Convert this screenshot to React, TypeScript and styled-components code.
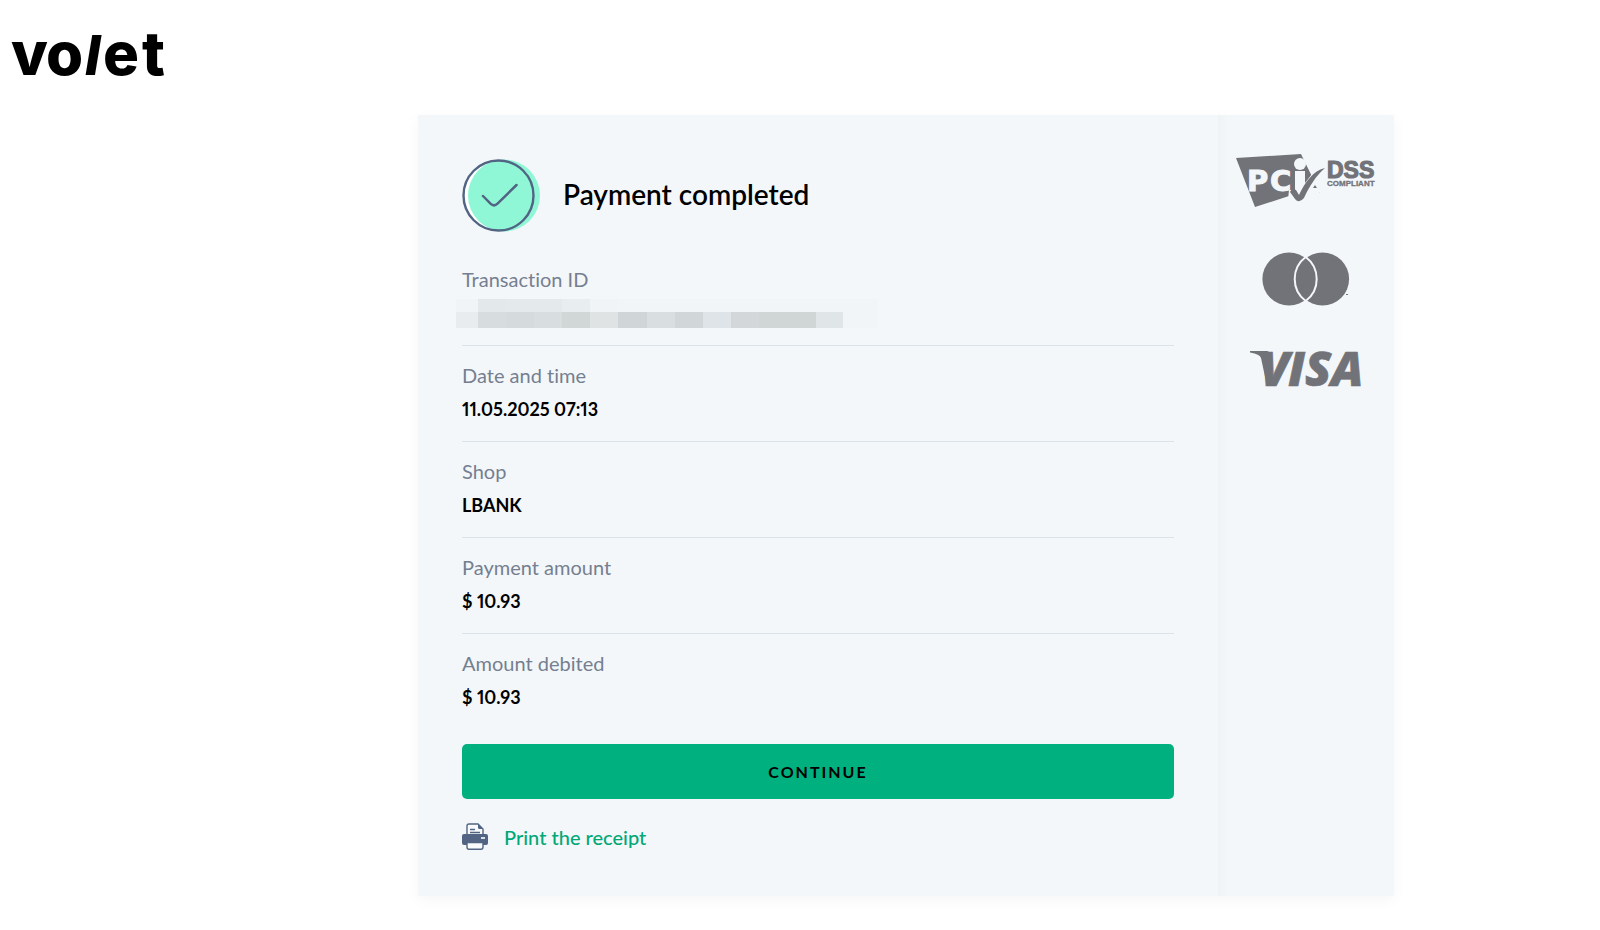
import React from "react";
import styled, { createGlobalStyle } from "styled-components";

const GlobalStyle = createGlobalStyle`
  *, *::before, *::after { box-sizing: border-box; }
  body {
    margin: 0;
    background: #fff;
    color: #000;
    font-family: Lato, "Open Sans", sans-serif;
    font-size: 20px;
    line-height: 24px;
    font-variant-ligatures: none;
  }
`;

const Header = styled.header`
  padding: 12px 12px 0;
  height: 115px;
`;

const HomeLink = styled.a`
  display: inline-block;
  color: #000;
  svg { display: block; overflow: visible; }
`;

const Page = styled.div`
  display: grid;
  grid-template-columns: 418fr 976fr 206fr;
  padding-bottom: 32px;
`;

const Card = styled.main`
  grid-column: 2;
  display: flex;
  background: #f3f7fa;
  box-shadow: 0 4px 14px rgba(0, 0, 0, 0.04);
`;

const Details = styled.section`
  flex: 1;
  min-width: 0;
  padding: 44px 44px 42px;
`;

const Partners = styled.aside`
  flex: 0 0 176px;
  display: flex;
  flex-direction: column;
  align-items: center;
  padding-top: 38px;
  background: linear-gradient(to right, #eef3f4, #f3f7fa 10px);
  svg { display: block; overflow: visible; }
`;

const PartnerList = styled.ul`
  display: flex;
  flex-direction: column;
  align-items: center;
  gap: 44px;
  margin: 0;
  padding: 0;
  list-style: none;
`;

const Status = styled.div`
  display: flex;
  align-items: center;
  gap: 23px;
  margin-bottom: 18px;
`;

const Title = styled.h1`
  margin: 0;
  padding-bottom: 4px;
  font-size: 28px;
  line-height: 36px;
  font-weight: 600;
`;

const Rows = styled.dl`
  margin: 0 0 35px;
`;

const Row = styled.div<{ $last?: boolean }>`
  padding: 17px 0 ${(p) => (p.$last ? 0 : 20)}px;
  border-bottom: ${(p) => (p.$last ? "none" : "1px solid #dbe2e9")};
`;

const Label = styled.dt`
  margin-bottom: 10px;
  color: #757f90;
`;

const Value = styled.dd`
  display: flow-root;
  margin: 0;
  height: 24px;
  font-size: 18px;
  font-weight: 700;
  font-variant-numeric: proportional-nums;
`;

const Mosaic = styled.svg`
  display: block;
  margin: -2px 0 -3px -6px;
`;

const ContinueButton = styled.button`
  display: block;
  width: 100%;
  height: 55px;
  border: 0;
  border-radius: 5px;
  background: #00b07f;
  color: #000;
  font: 700 16px/24px Lato, sans-serif;
  letter-spacing: 2px;
  cursor: pointer;
`;

const PrintLink = styled.a`
  display: inline-flex;
  align-items: center;
  gap: 16px;
  margin-top: 24px;
  color: #00a876;
  font-weight: 500;
  text-decoration: none;
`;

const LOWER = [
  [0, 22, "#e8ecee"], [22, 28, "#d7dcde"], [50, 28, "#d5dadc"], [78, 28, "#d8dde0"],
  [106, 28, "#d1d6d6"], [134, 28, "#dfe3e4"], [162, 29, "#d0d5d8"], [191, 28, "#d9dee1"],
  [219, 28, "#d1d6d9"], [247, 28, "#dfe4e8"], [275, 28, "#d3d7d9"], [303, 57, "#d0d5d5"],
  [360, 27, "#e0e5e8"], [387, 35, "#f1f5f8"],
] as const;

const UPPER = [
  [0, 22, "#f0f4f7"], [22, 28, "#e3e8ea"], [50, 56, "#e4e9eb"], [106, 28, "#e8edef"],
  [134, 28, "#f0f4f7"], [162, 260, "#f1f5f8"],
] as const;

const HiddenId = () => (
  <Mosaic width="422" height="29" role="img" aria-label="Hidden" shapeRendering="crispEdges">
    {UPPER.map(([x, w, c]) => <rect key={x} x={x} y="0" width={w} height="13" fill={c} />)}
    {LOWER.map(([x, w, c]) => <rect key={x} x={x} y="13" width={w} height="16" fill={c} />)}
  </Mosaic>
);

const Logo = () => (
  <svg width="170" height="84" role="img" aria-label="volet" fontFamily="Inter" fontWeight="800" fontSize="60">
    <text y="63" x="-1">v</text>
    <text y="63" x="34">o</text>
    <text y="63" x="73" fontStyle="italic" fontSize="55">l</text>
    <text y="63" x="91">e</text>
    <text y="63" x="130">t</text>
  </svg>
);

const Success = () => (
  <svg width="78" height="73" fill="none" aria-hidden="true">
    <circle cx="36.500" cy="36.500" r="35" fill="#fff" />
    <circle cx="42" cy="36.500" r="36" fill="#90f7d6" />
    <circle cx="36.500" cy="36.500" r="35" stroke="#526483" strokeWidth="2.400" />
    <path d="M21 37 L28.500 44.700 Q32 48 35.500 44.700 L54.500 26" stroke="#526483" strokeWidth="2.500" strokeLinecap="round" />
  </svg>
);

const Printer = () => (
  <svg width="26" height="27" fill="none" aria-hidden="true">
    <path d="M5 13 V3 Q5 1 7 1 H16 L21 6 V13" fill="#f8fafc" stroke="#526483" strokeWidth="1.4" />
    <path d="M16 1 V4.500 Q16 6 17.500 6 H21 Z" fill="#526483" />
    <path d="M8 6.500 H13 M8 9.500 H18" stroke="#526483" strokeWidth="1.3" />
    <rect x="0" y="11" width="26" height="11" rx="2" fill="#526483" />
    <path d="M19 15 H23" stroke="#fff" strokeWidth="1.6" />
    <path d="M5 19.500 H21 V24 Q21 26.200 19 26.200 H7 Q5 26.200 5 24 Z" fill="#f8fafc" stroke="#526483" strokeWidth="1.4" />
  </svg>
);

const Pci = () => (
  <svg width="140" height="55" role="img" aria-label="PCI DSS compliant">
    <path d="M0 5 L65 1 L84 40 L53 43 L19 54 Z" fill="#727378" />
    <text x="11 34" y="38" fill="#f3f7fa" stroke="#f3f7fa" fontFamily="DejaVu Sans" fontWeight="700" fontSize="29">PC</text>
    <path d="M59 18 H69 V30 L79 17 L90 14 L83 43 L70 50 L52 47 L53 37 H59 Z" fill="#f3f7fa" />
    <circle cx="64" cy="11" r="6" fill="#f3f7fa" />
    <path d="M54 39 Q56 34 60 37 L63 42 C69 29 78 17 89 15 C80 23 74 32 68 45 Q63 51 59 46 Z" fill="#727378" />
    <path d="M77 35 L81 35 L79 32 Z" fill="#727378" />
    <g fill="#727378" stroke="#727378" fontFamily="Liberation Sans" fontWeight="700">
      <text x="91" y="25" fontSize="23" strokeWidth="1.2">DSS</text>
      <text x="91" y="33" fontSize="8" strokeWidth="0.3">COMPLIANT</text>
    </g>
  </svg>
);

const Mastercard = () => (
  <svg width="88" height="54" role="img" aria-label="Mastercard">
    <circle cx="27" cy="27" r="26.600" fill="#727378" />
    <circle cx="60.500" cy="27" r="26.600" fill="#727378" />
    <path d="M43.700 5 A27.500 27.500 0 0 1 43.700 49 A27.500 27.500 0 0 1 43.700 5 Z" fill="#727378" stroke="#f3f7fa" strokeWidth="2" />
    <path d="M84 42.500 H86" stroke="#727378" strokeWidth="1" />
  </svg>
);

const Visa = () => (
  <svg width="114" height="38" role="img" aria-label="Visa">
    <path d="M1 1 H18 Q20 1 20.500 4 L23 22 L18 36 L12 8 Q11 4 1 2.500 Z" fill="#727378" />
    <text x="11 39 56 82" y="36" fill="#727378" stroke="#727378" strokeWidth="0.6" fontFamily="Open Sans" fontStyle="italic" fontWeight="800" fontSize="48">VISA</text>
  </svg>
);

const FIELDS = [
  { label: "Transaction ID", value: <HiddenId /> },
  { label: "Date and time", value: "11.05.2025 07:13" },
  { label: "Shop", value: "LBANK" },
  { label: "Payment amount", value: "$ 10.93" },
  { label: "Amount debited", value: "$ 10.93" },
];

export default function App() {
  return (
    <>
      <GlobalStyle />
      <Header>
        <HomeLink href="#"><Logo /></HomeLink>
      </Header>
      <Page>
        <Card>
          <Details>
            <Status>
              <Success />
              <Title>Payment completed</Title>
            </Status>
            <Rows>
              {FIELDS.map((f, i) => (
                <Row key={f.label} $last={i === FIELDS.length - 1}>
                  <Label>{f.label}</Label>
                  <Value>{f.value}</Value>
                </Row>
              ))}
            </Rows>
            <ContinueButton type="button">CONTINUE</ContinueButton>
            <PrintLink href="#receipt">
              <Printer />
              Print the receipt
            </PrintLink>
          </Details>
          <Partners>
            <PartnerList>
              <li><Pci /></li>
              <li><Mastercard /></li>
              <li><Visa /></li>
            </PartnerList>
          </Partners>
        </Card>
      </Page>
    </>
  );
}
